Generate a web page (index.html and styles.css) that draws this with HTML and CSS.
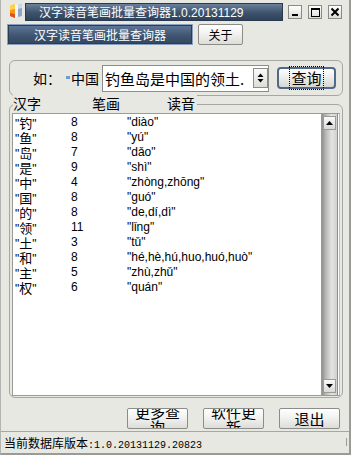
FILE: index.html
```html
<!DOCTYPE html>
<html>
<head>
<meta charset="utf-8">
<link rel="stylesheet" href="styles.css">
</head>
<body>
<div class="win">
  <div class="titlebar">
    <svg class="appicon" width="14" height="17" viewBox="0 0 14 17">
      <polygon points="1,4 6,2 6,16 1,14" fill="#f29a1c"/>
      <polygon points="1,4 6,2 6,7 1,8" fill="#ffd24a"/>
      <polygon points="1,11 6,12 6,16 1,14" fill="#e0501e"/>
      <polygon points="6,2 9,3 9,15 6,16" fill="#f4f4f4"/>
      <polygon points="9,3 13,2 13,14 9,15" fill="#8ea6c8"/>
      <polygon points="9,3 13,2 13,6 9,7" fill="#c9d7ea"/>
    </svg>
    <div class="title"><span class="cn">汉字读音笔画批量查询器</span>1.0.20131129</div>
    <div class="tbtns">
      <span class="tb"><span class="min"></span></span>
      <span class="tb"><span class="max"></span></span>
      <span class="tb">
        <svg width="10" height="10" viewBox="0 0 10 10"><path d="M1.5 1.5 L8.5 8.5 M8.5 1.5 L1.5 8.5" stroke="#000" stroke-width="2"/></svg>
      </span>
    </div>
  </div>

  <div class="toolbar">
    <div class="bluebtn">汉字读音笔画批量查询器</div>
    <div class="btn about">关于</div>
  </div>

  <div class="group1">
    <span class="ru">如：</span>
    <span class="flag"></span>
    <span class="zg">中国</span>
    <div class="combo">
      <span class="ctext">钓鱼岛是中国的领土.</span>
      <span class="spin">
        <svg width="7" height="10" viewBox="0 0 7 10"><path d="M3.5 0.5 L6.5 4 L0.5 4 Z M0.5 6 L6.5 6 L3.5 9.5 Z" fill="#000"/></svg>
      </span>
    </div>
    <div class="qbtn"><span class="focus">查询</span></div>
  </div>

  <div class="group2">
    <div class="legend">
      <span class="lg1">汉字</span><span class="lg2">笔画</span><span class="lg3">读音</span>
    </div>
    <div class="listbox">
      <div class="rows">
        <div class="row"><span class="c1">"<span class="cn">钓</span>"</span><span class="c2">8</span><span class="c3">"diào"</span></div>
        <div class="row"><span class="c1">"<span class="cn">鱼</span>"</span><span class="c2">8</span><span class="c3">"yú"</span></div>
        <div class="row"><span class="c1">"<span class="cn">岛</span>"</span><span class="c2">7</span><span class="c3">"dǎo"</span></div>
        <div class="row"><span class="c1">"<span class="cn">是</span>"</span><span class="c2">9</span><span class="c3">"shì"</span></div>
        <div class="row"><span class="c1">"<span class="cn">中</span>"</span><span class="c2">4</span><span class="c3">"zhòng,zhōng"</span></div>
        <div class="row"><span class="c1">"<span class="cn">国</span>"</span><span class="c2">8</span><span class="c3">"guó"</span></div>
        <div class="row"><span class="c1">"<span class="cn">的</span>"</span><span class="c2">8</span><span class="c3">"de,dí,dì"</span></div>
        <div class="row"><span class="c1">"<span class="cn">领</span>"</span><span class="c2">11</span><span class="c3">"lǐng"</span></div>
        <div class="row"><span class="c1">"<span class="cn">土</span>"</span><span class="c2">3</span><span class="c3">"tǔ"</span></div>
        <div class="row"><span class="c1">"<span class="cn">和</span>"</span><span class="c2">8</span><span class="c3">"hé,hè,hú,huo,huó,huò"</span></div>
        <div class="row"><span class="c1">"<span class="cn">主</span>"</span><span class="c2">5</span><span class="c3">"zhù,zhǔ"</span></div>
        <div class="row"><span class="c1">"<span class="cn">权</span>"</span><span class="c2">6</span><span class="c3">"quán"</span></div>
      </div>
      <div class="sb">
        <div class="sbbtn"><svg width="7" height="4" viewBox="0 0 7 4"><path d="M3.5 0 L7 4 L0 4 Z" fill="#000"/></svg></div>
        <div class="sbtrack"></div>
        <div class="sbbtn"><svg width="7" height="4" viewBox="0 0 7 4"><path d="M0 0 L7 0 L3.5 4 Z" fill="#000"/></svg></div>
      </div>
    </div>
  </div>

  <div class="bottom">
    <div class="btn bb"><span class="bbt">更多查询</span></div>
    <div class="btn bb"><span class="bbt">软件更新</span></div>
    <div class="btn bb"><span class="bbt">退出</span></div>
  </div>

  <div class="status">
    <span class="st">当前数据库版本<span class="mono">:1.0.20131129.20823</span></span>
    <span class="grip"></span>
  </div>
</div>
</body>
</html>
```

FILE: styles.css
```css
* { box-sizing: border-box; margin: 0; padding: 0; }
html, body { width: 351px; height: 455px; overflow: hidden; }
body {
  background: #e8e8e3;
  font-family: "Liberation Sans", "Noto Sans CJK SC", sans-serif;
  font-size: 12px;
  color: #000;
}
.cn { font-family: "Noto Sans CJK SC", sans-serif; }

.win {
  width: 351px;
  height: 455px;
  display: flex;
  flex-direction: column;
  border-left: 1px solid #b4b4b0;
  border-right: 2px solid #9a9a96;
  border-bottom: 2px solid #9a9a96;
}

/* title bar */
.titlebar {
  height: 23px;
  display: flex;
  align-items: flex-start;
  padding-top: 3px;
}
.appicon { margin: -1px 0 0 8px; }
.title {
  margin-left: 2px;
  width: 258px;
  height: 18px;
  background: linear-gradient(#6a809b, #3d526c 55%, #2f4259);
  border: 1px solid #2a3a4e;
  color: #fff;
  font-size: 12px;
  line-height: 16px;
  padding-left: 13px;
  white-space: nowrap;
}
.title .cn { font-size: 12px; }
.tbtns {
  display: flex;
  gap: 6px;
  margin-left: 5px;
  margin-top: 2px;
}
.tb {
  width: 14px;
  height: 14px;
  border: 1px solid #8a8a86;
  background: linear-gradient(#ffffff, #dcdcd8);
  display: flex;
  align-items: center;
  justify-content: center;
}
.min { width: 6px; height: 2px; background: #000; margin-top: 6px; }
.max { width: 9px; height: 9px; border: 1px solid #000; border-top-width: 2px; }

/* toolbar */
.toolbar {
  height: 22px;
  display: flex;
  align-items: flex-start;
  padding-left: 6px;
  margin-top: 1px;
}
.bluebtn {
  width: 186px;
  height: 21px;
  background: linear-gradient(#62799a, #3f5572 55%, #33475f);
  border: 1px solid #8aa0bf;
  box-shadow: inset 0 0 0 1px #2c3c52;
  color: #fff;
  font-family: "Noto Sans CJK SC", sans-serif;
  font-size: 12px;
  line-height: 19px;
  text-align: center;
}
.btn {
  background: linear-gradient(#ffffff, #f0f0ee 50%, #dcdcd8);
  border: 1px solid #8c8c88;
  border-radius: 2px;
  font-family: "Noto Sans CJK SC", sans-serif;
  text-align: center;
}
.about {
  width: 45px;
  height: 21px;
  margin-left: 5px;
  font-size: 12px;
  line-height: 19px;
}

/* group 1 */
.group1 {
  margin: 14px 6px 0 8px;
  height: 36px;
  border: 1px solid #a6a6a2;
  border-radius: 6px;
  display: flex;
  align-items: center;
  font-family: "Noto Sans CJK SC", sans-serif;
  font-size: 14px;
}
.ru { margin-left: 23px; width: 33px; }
.flag {
  width: 4px; height: 3px;
  background: #6aa0d0;
  margin: -2px 0 0 0;
}
.zg { margin-left: 1px; width: 31px; }
.combo {
  width: 167px;
  height: 27px;
  background: #fff;
  border: 1px solid #8c8c88;
  display: flex;
  align-items: center;
  padding-left: 2px;
  font-size: 15px;
  overflow: hidden;
}
.ctext { width: 148px; white-space: nowrap; overflow: hidden; }
.spin {
  width: 15px;
  height: 20px;
  border: 1px solid #8c8c88;
  background: linear-gradient(#fafafa, #dcdcd8);
  display: flex;
  align-items: center;
  justify-content: center;
}
.qbtn {
  margin-left: 8px;
  width: 59px;
  height: 22px;
  border: 2px solid #52698a;
  border-radius: 4px;
  background: linear-gradient(#ffffff, #ececea 50%, #d6d6d2);
  display: flex;
  align-items: center;
  justify-content: center;
  font-size: 15px;
}
.focus {
  outline: 1px dotted #000;
  padding: 0 1px;
  line-height: 22px;
}

/* group 2 */
.group2 {
  position: relative;
  margin: 8px 6px 0 8px;
  height: 294px;
  border: 1px solid #a6a6a2;
  border-radius: 6px;
  padding: 8px 2px 1px 2px;
}
.legend {
  position: absolute;
  top: -11px;
  left: 3px;
  background: #e8e8e3;
  font-family: "Noto Sans CJK SC", sans-serif;
  font-size: 14px;
  line-height: 18px;
  display: flex;
  padding-right: 2px;
}
.lg1 { width: 79px; }
.lg2 { width: 75px; }
.listbox {
  height: 283px;
  border: 1px solid #9a9a96;
  border-right-color: #bcbcb8;
  background: #fff;
  display: flex;
}
.rows {
  flex: 1;
  padding: 1px 0 0 2px;
}
.row {
  height: 15px;
  line-height: 15px;
  display: flex;
  white-space: nowrap;
  font-size: 12px;
}
.row .cn { font-size: 13px; line-height: 15px; }
.c1 { width: 56px; }
.c2 { width: 56px; }
.sb {
  width: 17px;
  border-left: 1px solid #9a9a96;
  border-right: 1px solid #8c8c88;
  background: linear-gradient(to right, #909090, #b8b8b6 25%, #e4e4e2 65%, #d0d0ce);
  display: flex;
  flex-direction: column;
  padding: 2px 1px;
  margin-right: 1px;
}
.sbbtn {
  height: 14px;
  background: linear-gradient(#fafafa, #d8d8d6);
  border: 1px solid #9a9a96;
  display: flex;
  align-items: center;
  justify-content: center;
}
.sbtrack { flex: 1; }

/* bottom buttons */
.bottom {
  margin-top: 10px;
  height: 21px;
  display: flex;
  justify-content: flex-end;
  gap: 15px;
  padding-right: 9px;
}
.bb {
  width: 61px;
  height: 21px;
  overflow: hidden;
  display: flex;
  align-items: center;
  justify-content: center;
  padding: 0 6px;
  font-size: 15px;
}
.bbt { line-height: 15px; display: block; }

/* status bar */
.status {
  margin-top: 2px;
  flex: 1;
  border-top: 1px solid #a6a6a2;
  display: flex;
  align-items: center;
  padding-left: 3px;
  position: relative;
}
.st {
  font-family: "Noto Sans CJK SC", sans-serif;
  font-size: 12px;
  white-space: nowrap;
}
.mono { font-family: "Liberation Mono", monospace; font-size: 10px; }
.grip {
  position: absolute;
  right: 2px;
  top: 6px;
  width: 1px;
  height: 8px;
  background: #9a9a96;
}
```
